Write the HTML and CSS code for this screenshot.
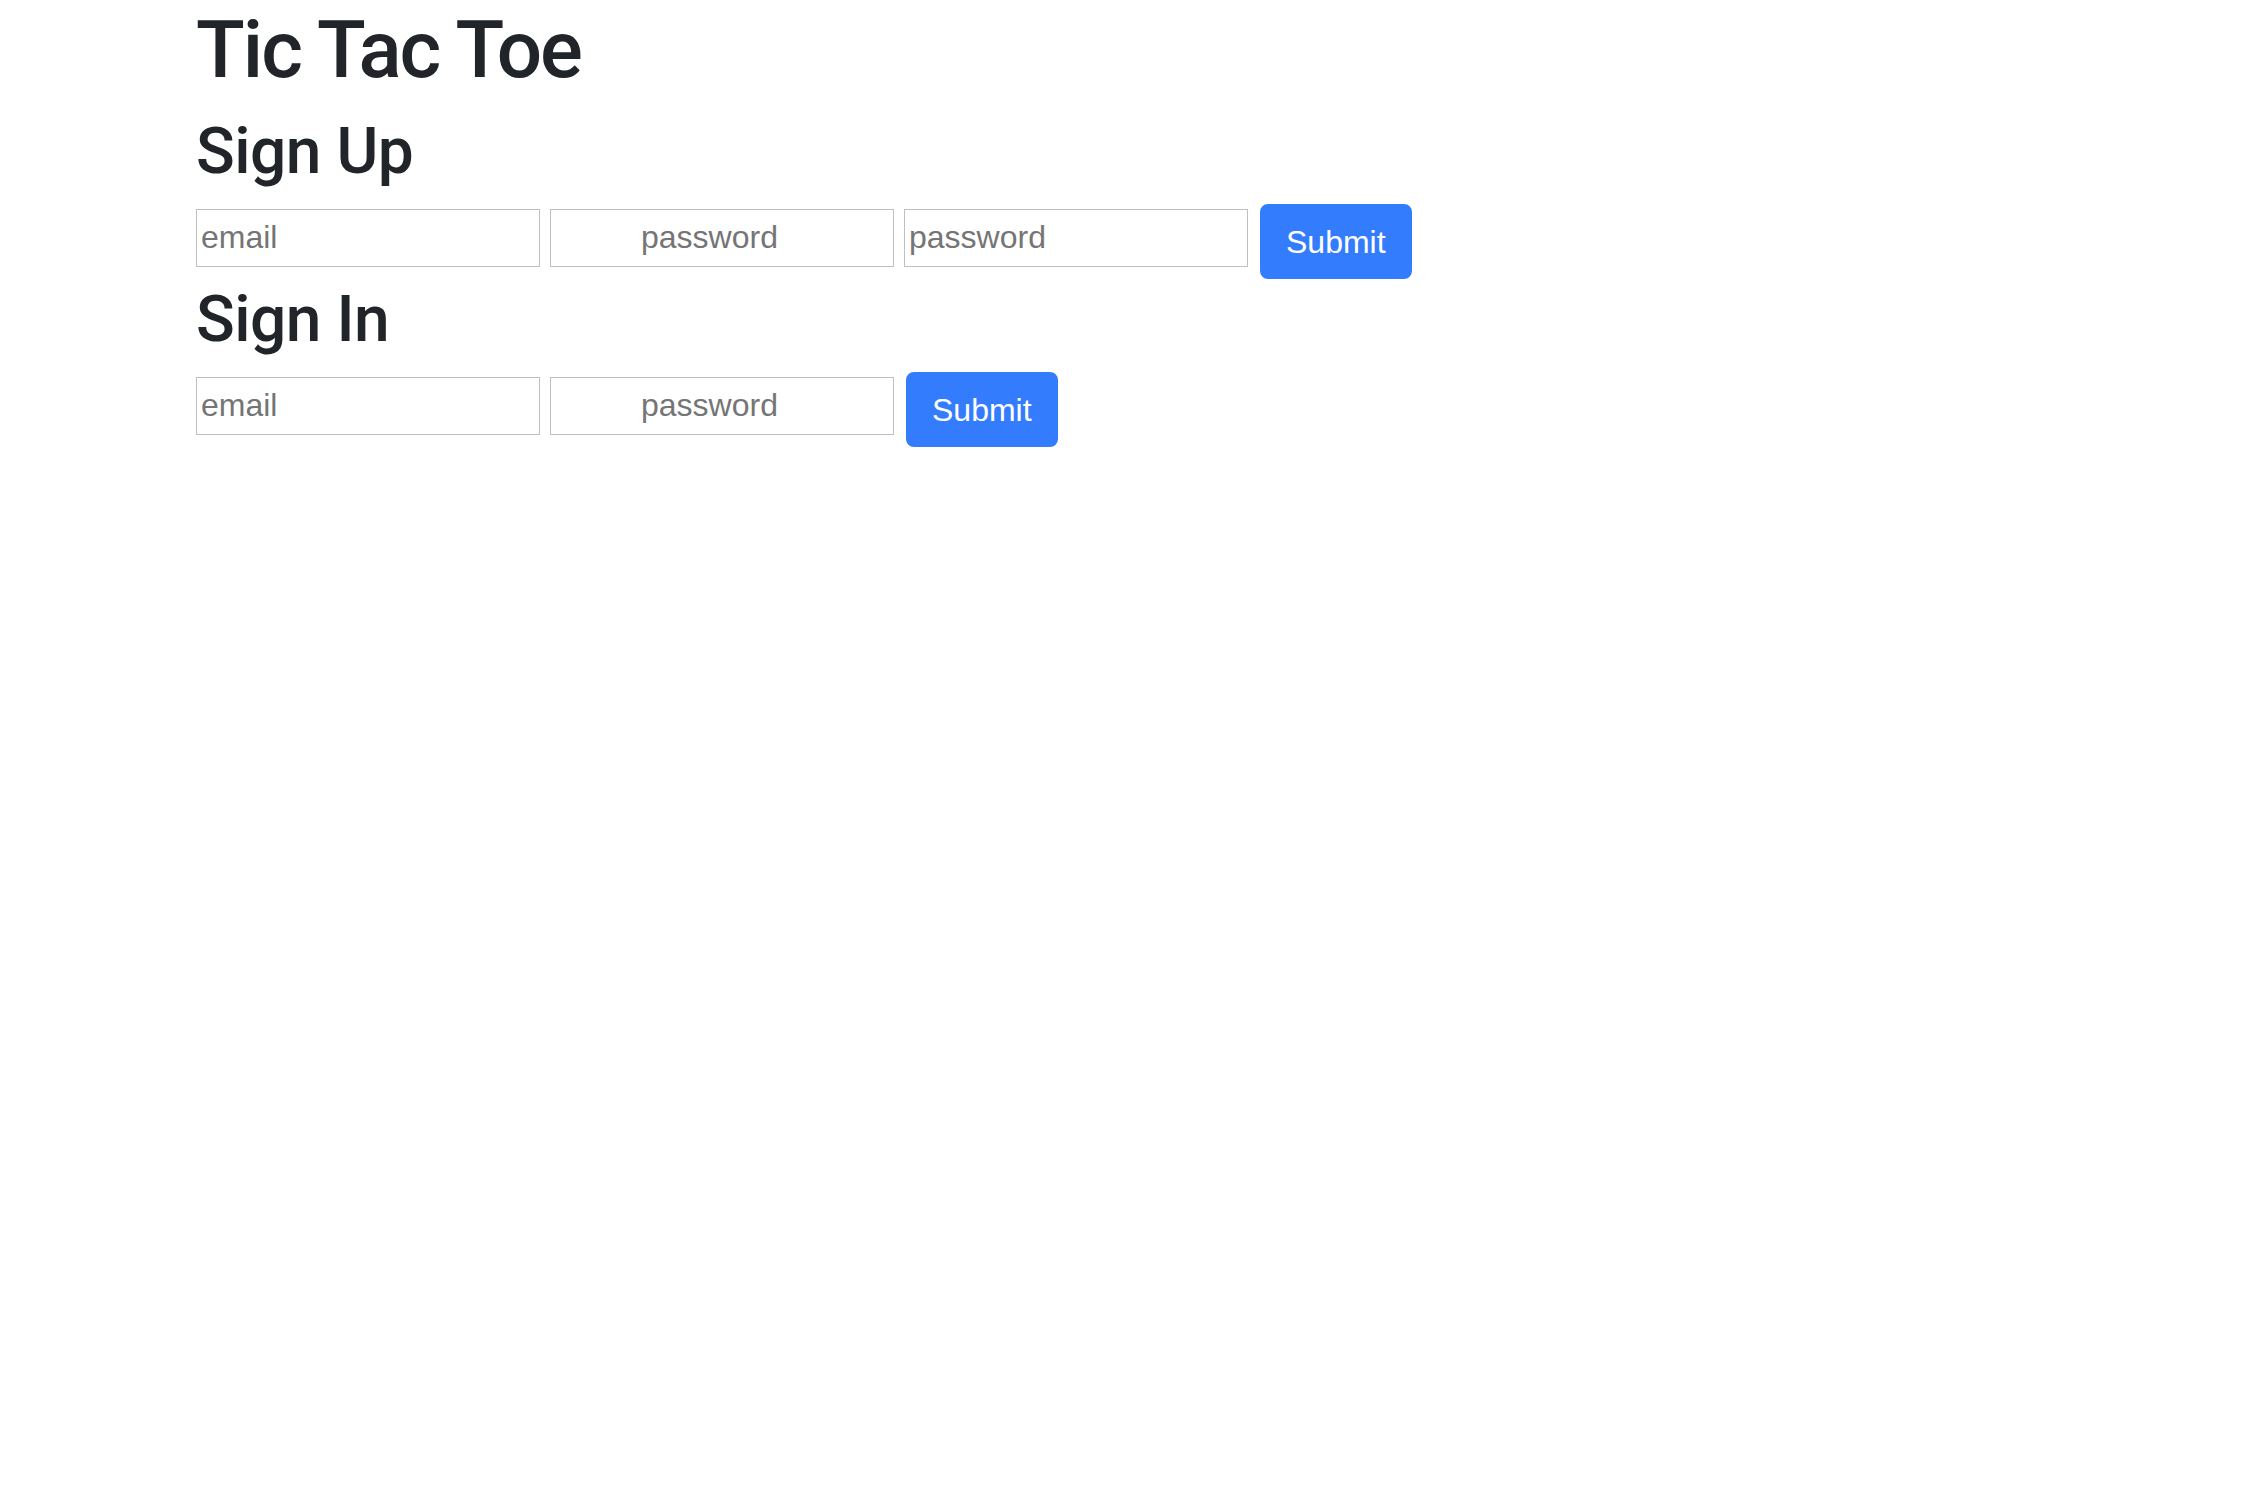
FILE: index.html
```html
<!DOCTYPE html>
<html lang="en">
<head>
<meta charset="utf-8">
<title>Tic Tac Toe</title>
<link rel="stylesheet" href="styles.css">
</head>
<body>
<div class="container">
  <h1 class="title">Tic Tac Toe</h1>
  <h2 class="section-title">Sign Up</h2>
  <form class="auth-form">
    <input class="field" type="email" placeholder="email">
    <input class="field field-indent" type="password" placeholder="password">
    <input class="field" type="password" placeholder="password">
    <button class="btn-primary" type="submit">Submit</button>
  </form>
  <h2 class="section-title">Sign In</h2>
  <form class="auth-form">
    <input class="field" type="email" placeholder="email">
    <input class="field field-indent" type="password" placeholder="password">
    <button class="btn-primary" type="submit">Submit</button>
  </form>
</div>
</body>
</html>
```
FILE: styles.css
```css
html, body {
  margin: 0;
  padding: 0;
  background: #ffffff;
}

body {
  font-family: "Liberation Sans", Arial, sans-serif;
  font-size: 32px;
  line-height: 1.5;
  color: #212529;
}

.container {
  max-width: 1922px;
  margin: 0 auto;
  padding: 0 31px;
  box-sizing: border-box;
}

.title {
  font-family: Roboto, "Liberation Sans", sans-serif;
  font-weight: 500;
  font-size: 80px;
  line-height: 1.2;
  letter-spacing: -2px;
  margin: 2px 0 16px;
}

.section-title {
  font-family: Roboto, "Liberation Sans", sans-serif;
  font-weight: 500;
  font-size: 64px;
  line-height: 1.2;
  letter-spacing: -0.5px;
  margin: 0 0 13px;
}

.auth-form {
  display: flex;
  align-items: flex-start;
  gap: 10px;
  margin: 0 0 3px;
}

.field {
  box-sizing: border-box;
  width: 344px;
  height: 58px;
  margin-top: 5px;
  padding: 4px 4px;
  border: 1px solid #c0c0c0;
  border-radius: 0;
  font-family: "Liberation Sans", Arial, sans-serif;
  font-size: 32px;
  line-height: 48px;
  color: #212529;
  background: #ffffff;
  outline: none;
}

.field::placeholder {
  color: #757575;
  opacity: 1;
}

.field-indent {
  padding-left: 90px;
}

.btn-primary {
  box-sizing: border-box;
  height: 75px;
  padding: 12px 24px;
  margin-left: 2px;
  border: 2px solid #347cfe;
  border-radius: 8px;
  background: #347cfe;
  color: #ffffff;
  font-family: "Liberation Sans", Arial, sans-serif;
  font-size: 32px;
  line-height: 48px;
  cursor: pointer;
}
```
